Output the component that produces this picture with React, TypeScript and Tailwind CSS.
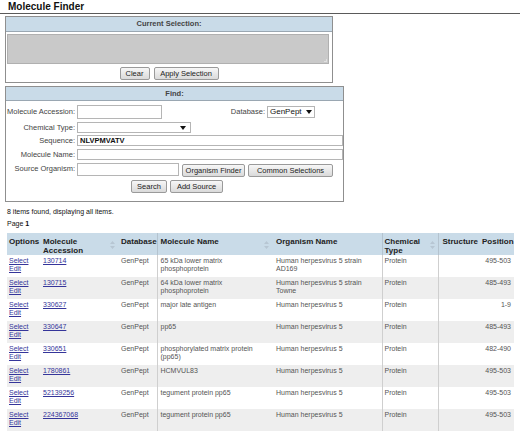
import React from "react";

const rows = [
  { acc: "130714", name: ["65 kDa lower matrix", "phosphoprotein"], org: ["Human herpesvirus 5 strain", "AD169"], pos: "495-503" },
  { acc: "130715", name: ["64 kDa lower matrix", "phosphoprotein"], org: ["Human herpesvirus 5 strain", "Towne"], pos: "485-493" },
  { acc: "330627", name: ["major late antigen"], org: ["Human herpesvirus 5"], pos: "1-9" },
  { acc: "330647", name: ["pp65"], org: ["Human herpesvirus 5"], pos: "485-493" },
  { acc: "330651", name: ["phosphorylated matrix protein", "(pp65)"], org: ["Human herpesvirus 5"], pos: "482-490" },
  { acc: "1780861", name: ["HCMVUL83"], org: ["Human herpesvirus 5"], pos: "495-503" },
  { acc: "52139256", name: ["tegument protein pp65"], org: ["Human herpesvirus 5"], pos: "495-503" },
  { acc: "224367068", name: ["tegument protein pp65"], org: ["Human herpesvirus 5"], pos: "495-503" },
];

function Btn({ children, w }: { children: React.ReactNode; w: string }) {
  return (
    <button
      className={`${w} h-[13px] flex items-center justify-center rounded-[2px] border border-[#9a9a9a] bg-gradient-to-b from-[#f7f7f7] to-[#dadada] text-[7.5px] leading-none text-[#222]`}
    >
      {children}
    </button>
  );
}

function Arrow() {
  return (
    <svg width="6" height="4" viewBox="0 0 6 4" className="shrink-0">
      <path d="M0 0h6L3 4z" fill="#111" />
    </svg>
  );
}

function SortIcon() {
  return (
    <svg width="5" height="8" viewBox="0 0 5 8" className="shrink-0 mt-[4px] mr-[3px]">
      <path d="M2.5 0L5 3H0z M2.5 8L0 5h5z" fill="#b7c6d3" />
    </svg>
  );
}

function Label({ children }: { children: React.ReactNode }) {
  return <div className="w-[70px] shrink-0 text-right text-[7.5px] text-[#444] pr-[1px]">{children}</div>;
}

export default function App() {
  return (
    <div className="w-[520px] h-[440px] bg-white overflow-hidden" style={{ fontFamily: '"Liberation Sans", Arial, sans-serif' }}>
      <div className="h-[14px] pl-[8px] text-[10px] leading-[13px] font-bold text-[#111] border-b-[1.5px] border-[#5a5a5a]">
        Molecule Finder
      </div>

      {/* current selection */}
      <div className="ml-[5px] mt-[2px] w-[328px] border border-[#8f8f8f]">
        <div className="h-[15px] bg-[#c9dbe8] border-b border-[#9aa7b2] text-center text-[7.5px] leading-[14px] font-bold text-[#444]">
          Current Selection:
        </div>
        <div className="ml-[1px] mr-[3px] mt-[2px] h-[30px] bg-[#c9c9c9] border border-[#b0b0b0] flex items-end justify-end">
          <div className="w-[3px] h-[3px] mr-[1px] mb-[1px] border-r border-b border-[#e0e0e0]" />
        </div>
        <div className="mt-[3px] mb-[2px] flex justify-center gap-[4px]">
          <Btn w="w-[30px]">Clear</Btn>
          <Btn w="w-[65px]">Apply Selection</Btn>
        </div>
      </div>

      {/* find */}
      <div className="ml-[5px] mt-[3px] w-[339px] border border-[#8f8f8f] pb-[8px]">
        <div className="h-[14px] bg-[#c9dbe8] border-b border-[#9aa7b2] text-center text-[7.5px] leading-[13px] font-bold text-[#444]">
          Find:
        </div>
        <div className="mt-[4px] h-[14px] flex items-center">
          <Label>Molecule Accession:</Label>
          <input readOnly className="ml-[1px] w-[85px] h-[14px] border border-[#b5b5b5] bg-white outline-none" />
          <div className="ml-auto mr-[28px] flex items-center">
            <span className="text-[7.5px] text-[#444] mr-[2px]">Database:</span>
            <div className="w-[48px] h-[12px] border border-[#b5b5b5] bg-white flex items-center justify-between px-[2px]">
              <span className="text-[8px] text-[#111]">GenPept</span>
              <Arrow />
            </div>
          </div>
        </div>
        <div className="mt-[3px] h-[11px] flex items-center">
          <Label>Chemical Type:</Label>
          <div className="ml-[1px] w-[114px] h-[11px] border border-[#b5b5b5] bg-white flex items-center justify-end pr-[4px]">
            <Arrow />
          </div>
        </div>
        <div className="mt-[2px] h-[11px] flex items-center">
          <Label>Sequence:</Label>
          <input
            readOnly
            value="NLVPMVATV"
            className="ml-[1px] w-[266px] h-[11px] border border-[#b5b5b5] bg-white px-[2px] text-[7.5px] font-semibold text-[#111] outline-none"
          />
        </div>
        <div className="mt-[3px] h-[11px] flex items-center">
          <Label>Molecule Name:</Label>
          <input readOnly className="ml-[1px] w-[266px] h-[11px] border border-[#b5b5b5] bg-white outline-none" />
        </div>
        <div className="mt-[3px] h-[14px] flex items-start">
          <Label>Source Organism:</Label>
          <input readOnly className="ml-[1px] w-[102px] h-[13px] border border-[#b5b5b5] bg-white outline-none" />
          <div className="ml-[3px] mt-[1px] flex gap-[3px]">
            <Btn w="w-[63px]">Organism Finder</Btn>
            <Btn w="w-[85px]">Common Selections</Btn>
          </div>
        </div>
        <div className="mt-[3px] flex justify-center gap-[3px] pl-[5px]">
          <Btn w="w-[36px]">Search</Btn>
          <Btn w="w-[53px]">Add Source</Btn>
        </div>
      </div>

      <div className="mt-[5px] ml-[7px] text-[7px] leading-[9px] text-[#111]">8 items found, displaying all items.</div>
      <div className="mt-[3px] ml-[7px] text-[7px] leading-[9px] text-[#111]">
        Page <span className="font-bold">1</span>
      </div>

      <table className="mt-[5px] ml-[7px] w-[507px] table-fixed border-collapse">
        <colgroup>
          <col className="w-[35px]" />
          <col className="w-[76px]" />
          <col className="w-[39px]" />
          <col className="w-[115px]" />
          <col className="w-[110px]" />
          <col className="w-[56px]" />
          <col className="w-[44px]" />
          <col className="w-[32px]" />
        </colgroup>
        <thead>
          <tr className="h-[22px] bg-[#c9dbe8] text-[8px] leading-[9px] font-bold text-[#222]">
            <th className="align-top text-left pl-[2px] pt-[4px]">Options</th>
            <th className="align-top text-left pl-[1px] pt-[4px]">
              <div className="flex justify-between">
                <span>
                  Molecule
                  <br />
                  Accession
                </span>
                <SortIcon />
              </div>
            </th>
            <th className="align-top text-left pl-[3px] pt-[4px]">Database</th>
            <th className="align-top text-left pl-[3px] pt-[4px] border-l border-[#b4c3cf]">
              <div className="flex justify-between">
                <span>Molecule Name</span>
                <SortIcon />
              </div>
            </th>
            <th className="align-top text-left pl-[4px] pt-[4px]">Organism Name</th>
            <th className="align-top text-left pl-[2px] pt-[4px] border-l border-[#b4c3cf]">
              <div className="flex justify-between">
                <span>
                  Chemical
                  <br />
                  Type
                </span>
                <SortIcon />
              </div>
            </th>
            <th className="align-top text-left pl-[4px] pt-[4px] border-l border-[#b4c3cf]">Structure</th>
            <th className="align-top text-right pr-[2px] pt-[4px]">Position</th>
          </tr>
        </thead>
        <tbody>
          {rows.map((r, i) => (
            <tr key={r.acc} className={`h-[22px] text-[7px] leading-[8px] text-[#555] ${i % 2 ? "bg-[#eeeeee]" : "bg-white"}`}>
              <td className="align-top pl-[2px] pt-[2px] text-[#35359a] underline">
                <div>Select</div>
                <div>Edit</div>
              </td>
              <td className="align-top pl-[1px] pt-[2px] text-[#35359a] underline">{r.acc}</td>
              <td className="align-top pl-[3px] pt-[2px]">GenPept</td>
              <td className="align-top pl-[3px] pt-[2px] border-l border-[#cfcfcf]">
                {r.name.map((t) => (
                  <div key={t}>{t}</div>
                ))}
              </td>
              <td className="align-top pl-[4px] pt-[2px]">
                {r.org.map((t) => (
                  <div key={t}>{t}</div>
                ))}
              </td>
              <td className="align-top pl-[2px] pt-[2px] border-l border-[#cfcfcf]">Protein</td>
              <td className="align-top border-l border-[#cfcfcf]" />
              <td className="align-top text-right pr-[3px] pt-[2px]">{r.pos}</td>
            </tr>
          ))}
        </tbody>
      </table>
    </div>
  );
}
